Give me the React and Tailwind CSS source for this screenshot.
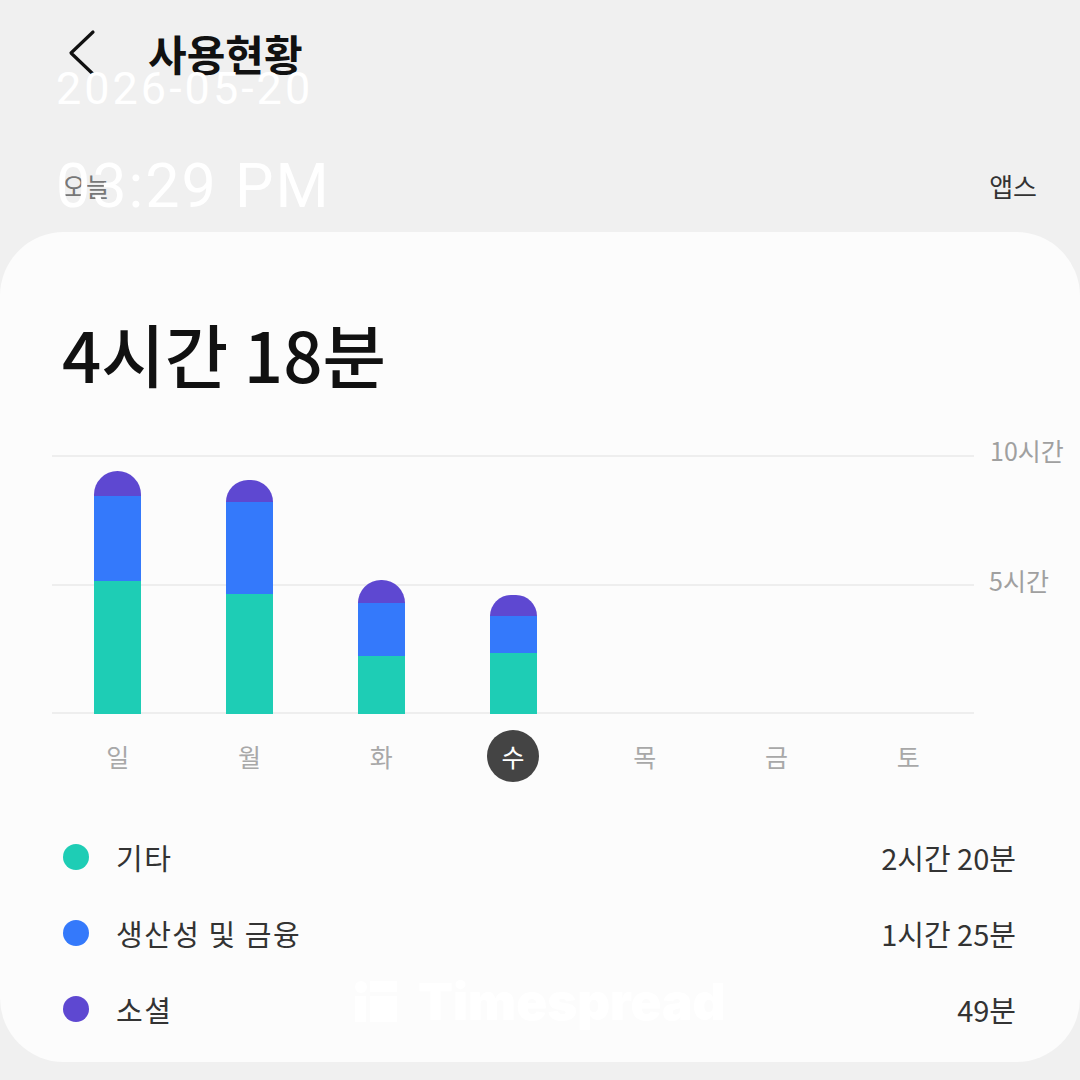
import React from 'react'

const days = [
  { label: '일', teal: 133, blue: 85, purple: 25 },
  { label: '월', teal: 120, blue: 92, purple: 22 },
  { label: '화', teal: 58, blue: 53, purple: 23 },
  { label: '수', teal: 61, blue: 37, purple: 21, today: true },
  { label: '목' },
  { label: '금' },
  { label: '토' },
]

const legend = [
  { name: '기타', value: '2시간 20분', dot: 'bg-[#1ecdb5]' },
  { name: '생산성 및 금융', value: '1시간 25분', dot: 'bg-[#3479fb]' },
  { name: '소셜', value: '49분', dot: 'bg-[#5e48d1]' },
]

const App = () => {
  return (
    <div className="relative w-[1080px] h-[1080px] overflow-hidden bg-[#f0f0f0] font-['Noto_Sans_CJK_KR',sans-serif]">
      {/* header */}
      <div className="h-[105px] flex items-center pl-[66px]">
        <svg width="32" height="48" viewBox="0 0 32 48" fill="none">
          <path d="M27 3 L5 24 L27 45" stroke="#111" strokeWidth="3.2" strokeLinecap="round" strokeLinejoin="round" />
        </svg>
        <h1 className="ml-[50px] text-[42px] font-bold text-[#111] leading-none">사용현황</h1>
      </div>

      <div className="h-[127px] flex items-end justify-between pb-[33px] pl-[62px] pr-[43px] text-[26px] leading-none">
        <span className="text-[#777]">오늘</span>
        <span className="text-[#333]">앱스</span>
      </div>

      {/* card */}
      <div className="h-[830px] rounded-[64px] bg-[#fcfcfc] pt-[87px]">
        <div className="pl-[62px] text-[69px] font-medium leading-none text-[#111]">4시간 18분</div>

        {/* chart */}
        <div className="mt-[67px] flex">
          <div className="relative ml-[52px] w-[922px] h-[259px]">
            <div className="absolute left-0 right-0 top-0 h-[2px] bg-[#eeeeee]" />
            <div className="absolute left-0 right-0 top-[129px] h-[2px] bg-[#eeeeee]" />
            <div className="absolute left-0 right-0 bottom-0 h-[2px] bg-[#eeeeee]" />
            <div className="relative h-full flex items-end">
              {days.map((d) => (
                <div key={d.label} className="flex-1 flex justify-center">
                  {d.teal && (
                    <div className="w-[47px] flex flex-col">
                      <div className="bg-[#5e48d1] rounded-t-full" style={{ height: d.purple }} />
                      <div className="bg-[#3479fb]" style={{ height: d.blue }} />
                      <div className="bg-[#1ecdb5]" style={{ height: d.teal }} />
                    </div>
                  )}
                </div>
              ))}
            </div>
          </div>
          <div className="relative flex-1">
            <span className="absolute left-[16px] top-[-23px] text-[25px] text-[#a0a0a0]">10시간</span>
            <span className="absolute left-[15px] top-[107px] text-[25px] text-[#a0a0a0]">5시간</span>
          </div>
        </div>

        <div className="mt-[16px] ml-[52px] w-[922px] h-[52px] flex">
          {days.map((d) => (
            <div key={d.label} className="flex-1 flex items-center justify-center">
              {d.today ? (
                <div className="w-[52px] h-[52px] rounded-full bg-[#444] flex items-center justify-center text-white text-[25px] leading-none">{d.label}</div>
              ) : (
                <span className="text-[25px] text-[#a8a8a8] leading-none">{d.label}</span>
              )}
            </div>
          ))}
        </div>

        {/* legend */}
        <div className="mt-[37px] pl-[63px] pr-[64px]">
          {legend.map((l) => (
            <div key={l.name} className="h-[76px] flex items-center">
              <div className={`w-[26px] h-[26px] rounded-full ${l.dot}`} />
              <span className="ml-[27px] text-[29px] tracking-[1.5px] text-[#333] leading-none">{l.name}</span>
              <span className="ml-auto text-[29px] text-[#333] leading-none">{l.value}</span>
            </div>
          ))}
        </div>
      </div>

      {/* overlay timestamp */}
      <div className="absolute left-[56px] top-[66px] font-['Roboto',sans-serif] text-white leading-none">
        <div className="text-[45px] tracking-[3px]">2026-05-20</div>
        <div className="mt-[45px] text-[61px] tracking-[2px]">03:29 PM</div>
      </div>

      {/* watermark */}
      <div className="absolute left-[355px] top-[976px] flex items-center gap-[20px]">
        <svg width="43" height="42" viewBox="0 0 43 42">
          <circle cx="6" cy="6" r="6" fill="#fff" />
          <rect x="15" y="0" width="27" height="11" fill="#fff" />
          <rect x="0" y="15" width="11" height="26" fill="#fff" />
          <rect x="15" y="15" width="27" height="26" fill="#fff" />
        </svg>
        <span className="font-['Inter',sans-serif] font-black text-[51px] leading-none text-white">Timespread</span>
      </div>
    </div>
  )
}

export default App
